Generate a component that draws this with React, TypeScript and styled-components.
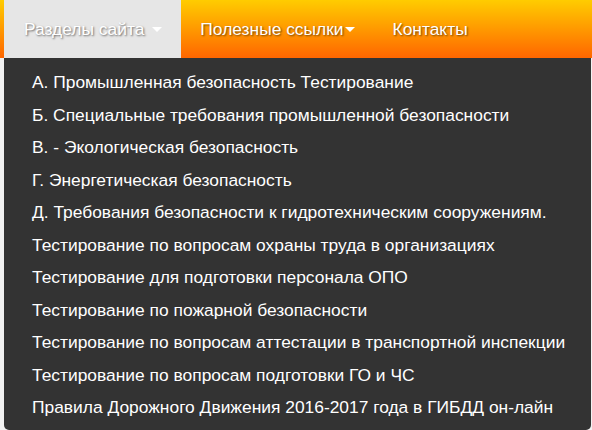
import React from 'react';
import styled, { createGlobalStyle } from 'styled-components';

const Global = createGlobalStyle`
  html, body {
    margin: 0;
    padding: 0;
    background: #f2f2f2;
    font-family: 'Liberation Sans', Arial, sans-serif;
  }
`;

const Page = styled.div`
  position: relative;
  width: 592px;
  height: 430px;
  overflow: hidden;
`;

const Navbar = styled.nav`
  display: flex;
  height: 58px;
  padding-left: 4px;
  background: linear-gradient(to bottom, #ffcc00 0%, #ff6600 100%);
`;

const NavItem = styled.div<{ $open?: boolean }>`
  position: relative;
  display: flex;
  align-items: center;
  padding: 0 19px 0 ${(p) => (p.$open ? 20 : 19)}px;
  line-height: 58px;
  font-size: 17.4px;
  color: #fff;
  text-shadow: 1px 1px 2px rgba(0, 0, 0, 0.55);
  background: ${(p) => (p.$open ? '#e6e6e6' : 'transparent')};
  cursor: pointer;
`;

const Caret = styled.span<{ $gap: number }>`
  display: inline-block;
  width: 0;
  height: 0;
  margin-left: ${(p) => p.$gap}px;
  border-top: 5px solid #fff;
  border-left: 5px solid transparent;
  border-right: 5px solid transparent;
`;

const Dropdown = styled.ul`
  position: absolute;
  top: 58px;
  left: 4px;
  width: 587px;
  margin: 0;
  padding: 8px 0 6px;
  list-style: none;
  background: #333;
  border-radius: 0 0 5px 5px;
`;

const MenuItem = styled.li`
  padding: 5px 28px;
  line-height: 22.5px;
  font-size: 17.4px;
  color: #fff;
  white-space: nowrap;
`;

const items = [
  'А. Промышленная безопасность Тестирование',
  'Б. Специальные требования промышленной безопасности',
  'В. - Экологическая безопасность',
  'Г. Энергетическая безопасность',
  'Д. Требования безопасности к гидротехническим сооружениям.',
  'Тестирование по вопросам охраны труда в организациях',
  'Тестирование для подготовки персонала ОПО',
  'Тестирование по пожарной безопасности',
  'Тестирование по вопросам аттестации в транспортной инспекции',
  'Тестирование по вопросам подготовки ГО и ЧС',
  'Правила Дорожного Движения 2016-2017 года в ГИБДД он-лайн',
];

function App() {
  return (
    <Page>
      <Global />
      <Navbar>
        <NavItem $open>
          Разделы сайта
          <Caret $gap={8} />
        </NavItem>
        <NavItem>
          Полезные ссылки
          <Caret $gap={1} />
        </NavItem>
        <NavItem>Контакты</NavItem>
      </Navbar>
      <Dropdown>
        {items.map((t) => (
          <MenuItem key={t}>{t}</MenuItem>
        ))}
      </Dropdown>
    </Page>
  );
}

export default App;
